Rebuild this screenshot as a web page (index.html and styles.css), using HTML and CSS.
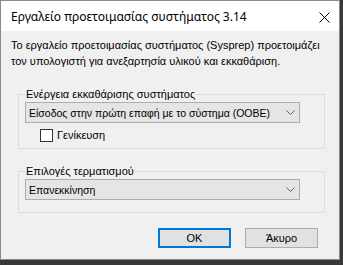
FILE: index.html
```html
<html lang="el">
<head>
    <meta charset="UTF-8">
    <title>Sysprep</title>
    <link rel="stylesheet" href="styles.css">
</head>
<body>
	<div class="window">
		<div class="titlebar">
			<span class="title">Εργαλείο προετοιμασίας συστήματος 3.14</span>
			<svg class="close" width="11" height="11" viewBox="0 0 11 11">
				<path d="M0.5 0.5 L10.5 10.5 M10.5 0.5 L0.5 10.5" stroke="#000" stroke-width="1" fill="none"/>
			</svg>
		</div>

		<div class="content">
			<p class="intro">Το εργαλείο προετοιμασίας συστήματος (Sysprep) προετοιμάζει<br>τον υπολογιστή για ανεξαρτησία υλικού και εκκαθάριση.</p>

			<fieldset class="group group-clean">
				<legend>Ενέργεια εκκαθάρισης συστήματος</legend>
				<div class="combo">
					<span>Είσοδος στην πρώτη επαφή με το σύστημα (OOBE)</span>
					<svg class="chevron" width="9" height="5" viewBox="0 0 9 5">
						<path d="M0.5 0.5 L4.5 4.5 L8.5 0.5" stroke="#606060" stroke-width="1" fill="none"/>
					</svg>
				</div>
				<label class="check">
					<span class="box"></span>
					<span>Γενίκευση</span>
				</label>
			</fieldset>

			<fieldset class="group group-shutdown">
				<legend>Επιλογές τερματισμού</legend>
				<div class="combo">
					<span>Επανεκκίνηση</span>
					<svg class="chevron" width="9" height="5" viewBox="0 0 9 5">
						<path d="M0.5 0.5 L4.5 4.5 L8.5 0.5" stroke="#606060" stroke-width="1" fill="none"/>
					</svg>
				</div>
			</fieldset>

			<div class="buttons">
				<button class="btn btn-default">OK</button>
				<button class="btn">Άκυρο</button>
			</div>
		</div>
	</div>
</body>
</html>
```

FILE: styles.css
```css
body {
	margin: 0;
	background-color: #3a3836;
	font-family: "Liberation Sans", Arial, sans-serif;
	font-size: 11px;
	color: #000;
}

.window {
	width: 338px;
	height: 258px;
	border: 1px solid #8a8a8a;
	background-color: #f0f0f0;
	display: flex;
	flex-direction: column;
}

.titlebar {
	height: 30px;
	flex-shrink: 0;
	background-color: #fff;
	display: flex;
	align-items: center;
	justify-content: space-between;
	padding: 0 9px 0 10px;
}

.title {
	font-family: "Noto Sans", sans-serif;
	font-size: 12px;
}

.close {
	margin-top: 2px;
}

.content {
	padding: 6px 15px 0 10px;
}

.intro {
	margin: 0;
	line-height: 16px;
	white-space: nowrap;
}

.group {
	margin: 17px 0 0 7px;
	padding: 0 6px 6px 6px;
	border: 1px solid #dcdcdc;
	width: 293px;
}

.group legend {
	padding: 0 1px;
	margin-left: 0;
	line-height: 16px;
}

.combo {
	height: 19px;
	border: 1px solid #adadad;
	background-color: #e5e5e5;
	display: flex;
	align-items: center;
	justify-content: space-between;
	padding: 0 4px 0 3px;
	width: 266px;
	white-space: nowrap;
	font-size: 10.5px;
}

.check {
	display: flex;
	align-items: center;
	gap: 4px;
	margin: 5px 0 0 15px;
	height: 14px;
}

.box {
	width: 11px;
	height: 11px;
	border: 1px solid #333;
	background-color: #fff;
}

.group-shutdown {
	margin-top: 14px;
	padding-bottom: 12px;
}

.buttons {
	display: flex;
	justify-content: flex-end;
	gap: 14px;
	margin: 15px 6px 0 0;
}

.btn {
	width: 73px;
	height: 20px;
	border: 1px solid #adadad;
	background-color: #e1e1e1;
	font-family: "Liberation Sans", Arial, sans-serif;
	font-size: 11px;
	padding: 0;
}

.btn-default {
	border: 2px solid #0078d7;
}
```
